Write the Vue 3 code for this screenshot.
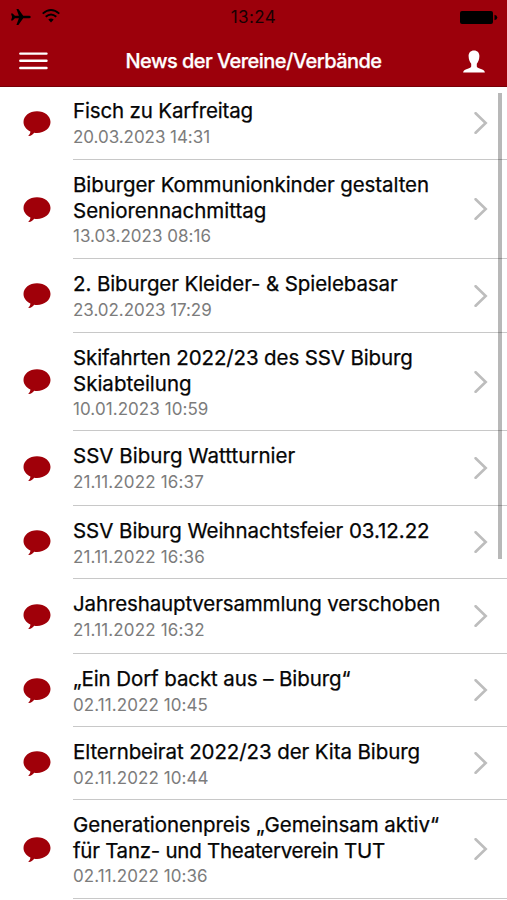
<script setup>
const items = [
  { lines: [['Fisch zu Karfreitag', -0.15]], date: '20.03.2023 14:31', dt: -0.05, h: 72 },
  { lines: [['Biburger Kommunionkinder gestalten', -0.09], ['Seniorennachmittag', 0]], date: '13.03.2023 08:16', dt: 0.03, h: 99 },
  { lines: [['2. Biburger Kleider- & Spielebasar', -0.09]], date: '23.02.2023 17:29', dt: -0.05, h: 74 },
  { lines: [['Skifahrten 2022/23 des SSV Biburg', -0.12], ['Skiabteilung', 0]], date: '10.01.2023 10:59', dt: 0.07, h: 98 },
  { lines: [['SSV Biburg Wattturnier', 0.03]], date: '21.11.2022 16:37', dt: 0.15, h: 75 },
  { lines: [['SSV Biburg Weihnachtsfeier 03.12.22', -0.05]], date: '21.11.2022 16:36', dt: 0.15, h: 73 },
  { lines: [['Jahreshauptversammlung verschoben', -0.14]], date: '21.11.2022 16:32', dt: 0.15, h: 75 },
  { lines: [['„Ein Dorf backt aus – Biburg“', -0.1]], date: '02.11.2022 10:45', dt: 0.08, h: 73 },
  { lines: [['Elternbeirat 2022/23 der Kita Biburg', -0.09]], date: '02.11.2022 10:44', dt: 0.08, h: 73 },
  { lines: [['Generationenpreis „Gemeinsam aktiv“', -0.06], ['für Tanz- und Theaterverein TUT', -0.26]], date: '02.11.2022 10:36', dt: 0.08, h: 99 },
]
</script>

<template>
  <main class="screen">
    <header class="header">
      <div class="status">
        <div class="signals">
          <svg width="20" height="18" viewBox="0 0 20 18"><path d="M0 5.5h1.7l2.2 2.2h4L5.4 1h2l4.8 6.7h5.1c1.5 0 2.5.5 2.5 1.2s-1 1.3-2.5 1.3h-5.1L7.4 17h-2l2.5-6.800h-4l-2.200 2.200H0l1.100-3.500z" /></svg>
          <svg class="wifi" width="18" height="14" viewBox="0 0 18 14" fill="none" stroke="#000" stroke-width="1.9"><path d="M.7 4.6Q9-2.6 17.3 4.6M3.7 7.8Q9 3.2 14.3 7.8" /><path d="M6.3 10.6Q9 8.3 11.7 10.6L9 13.5z" fill="#000" stroke="none" /></svg>
        </div>
        <span class="clock">13:24</span>
        <svg class="battery" width="39" height="15" viewBox="0 0 39 15"><rect x="1" y="1" width="33" height="13" rx="2" /><path d="M35.5 4.8q2.8.7 2.8 2.7t-2.8 2.7z" /></svg>
      </div>
      <nav class="nav">
        <svg class="menu" width="29" height="18" viewBox="0 0 29 18" stroke="#fff" stroke-width="2.4" stroke-linecap="round"><path d="M1.3 1.6h26.2M1.3 8.8h26.2M1.3 16h26.2" /></svg>
        <h1>News der Vereine/Verbände</h1>
        <svg class="user" width="22" height="23" viewBox="0 0 22 23" fill="#fff"><path d="M11 .4c3.500 0 5.500 2.300 5.400 5.700-.1 3.400-1.100 6-2.600 7.600v2.500c0 1 1 1.700 2.800 2.300 3 .9 5 1.700 5.300 4H.1c.3-2.300 2.300-3.100 5.300-4 1.800-.6 2.800-1.300 2.800-2.300v-2.500C6.700 12.100 5.700 9.500 5.600 6.100 5.500 2.700 7.500.4 11 .4z" /></svg>
      </nav>
    </header>
    <ul class="list">
      <li v-for="item in items" :key="item.lines[0][0]" class="row" :style="{ height: item.h + 'px' }">
        <svg class="bubble" width="28" height="26" viewBox="0 0 28 26"><path d="M14 .3c7.600 0 13.500 4.700 13.500 10.800S21.600 22 14 22c-1 0-1.900-.1-2.800-.2-1.500 1.800-3.200 3-5.200 3.300-.6.1-.7-.4-.3-.8 1.100-1 1.700-2.100 1.700-3.700C3.300 18.700.5 15.200.5 11.100.5 5 6.400.3 14 .3z" /></svg>
        <div class="body">
          <div class="text">
            <p v-for="[text, track] in item.lines" :key="text" class="line" :style="{ letterSpacing: track + 'px' }">{{ text }}</p>
            <p class="date" :style="{ letterSpacing: item.dt + 'px' }">{{ item.date }}</p>
          </div>
          <svg class="chevron" width="14" height="22" viewBox="0 0 14 22"><path d="M1.600 1.200 11.700 11 1.600 20.800" /></svg>
        </div>
      </li>
    </ul>
    <div class="scrollbar"></div>
  </main>
</template>

<style>
body { margin: 0; overflow: hidden; }
</style>
<style scoped>
.screen { position: relative; width: 507px; height: 900px; overflow: hidden; font-family: Inter, sans-serif; background: #fff; }
svg { display: block; flex: none; }
.header { box-sizing: border-box; background: #9c000b; height: 87px; border-bottom: 1px solid #780008; }
.status { display: grid; grid-template-columns: 1fr auto 1fr; align-items: center; height: 34px; padding: 0 9px 0 11px; }
.signals { display: flex; align-items: center; gap: 11px; }
.wifi { margin-bottom: 2px; }
.clock { font-size: 17px; letter-spacing: 0.4px; padding-right: 2px; color: #180002; }
.battery { justify-self: end; }
.nav { display: grid; grid-template-columns: 1fr auto 1fr; align-items: center; height: 54px; padding: 0 22px 0 19px; }
.nav h1 { margin: 0; padding-left: 3px; color: #fff; font-size: 20px; font-weight: 500; letter-spacing: -0.54px; line-height: 54px; -webkit-text-stroke: 0.25px #fff; }
.user { justify-self: end; }
.list { list-style: none; margin: 0; padding: 1px 0 0; }
.row { display: flex; align-items: center; }
.bubble { margin-left: 23px; fill: #a00009; }
.body { box-sizing: border-box; display: flex; align-items: center; justify-content: space-between; height: 100%; margin-left: 22px; flex: 1; padding-right: 19px; border-bottom: 1px solid #c8c8c8; }
.row:first-child .chevron { margin-bottom: 2px; }
.text { align-self: flex-start; padding-top: 12px; }
.row:first-child .text { padding-top: 10px; }
.text p { margin: 0; white-space: nowrap; }
.line { font-size: 20.5px; line-height: 25.5px; color: #050505; -webkit-text-stroke: 0.25px #050505; }
.date { font-size: 17px; line-height: 26px; color: #7c7c7c; }
.chevron { fill: none; stroke: #bdbdbd; stroke-width: 2.600; stroke-linecap: round; }
.scrollbar { position: absolute; right: 5px; top: 93px; width: 4px; height: 466px; background: rgba(0, 0, 0, 0.28); }
</style>
